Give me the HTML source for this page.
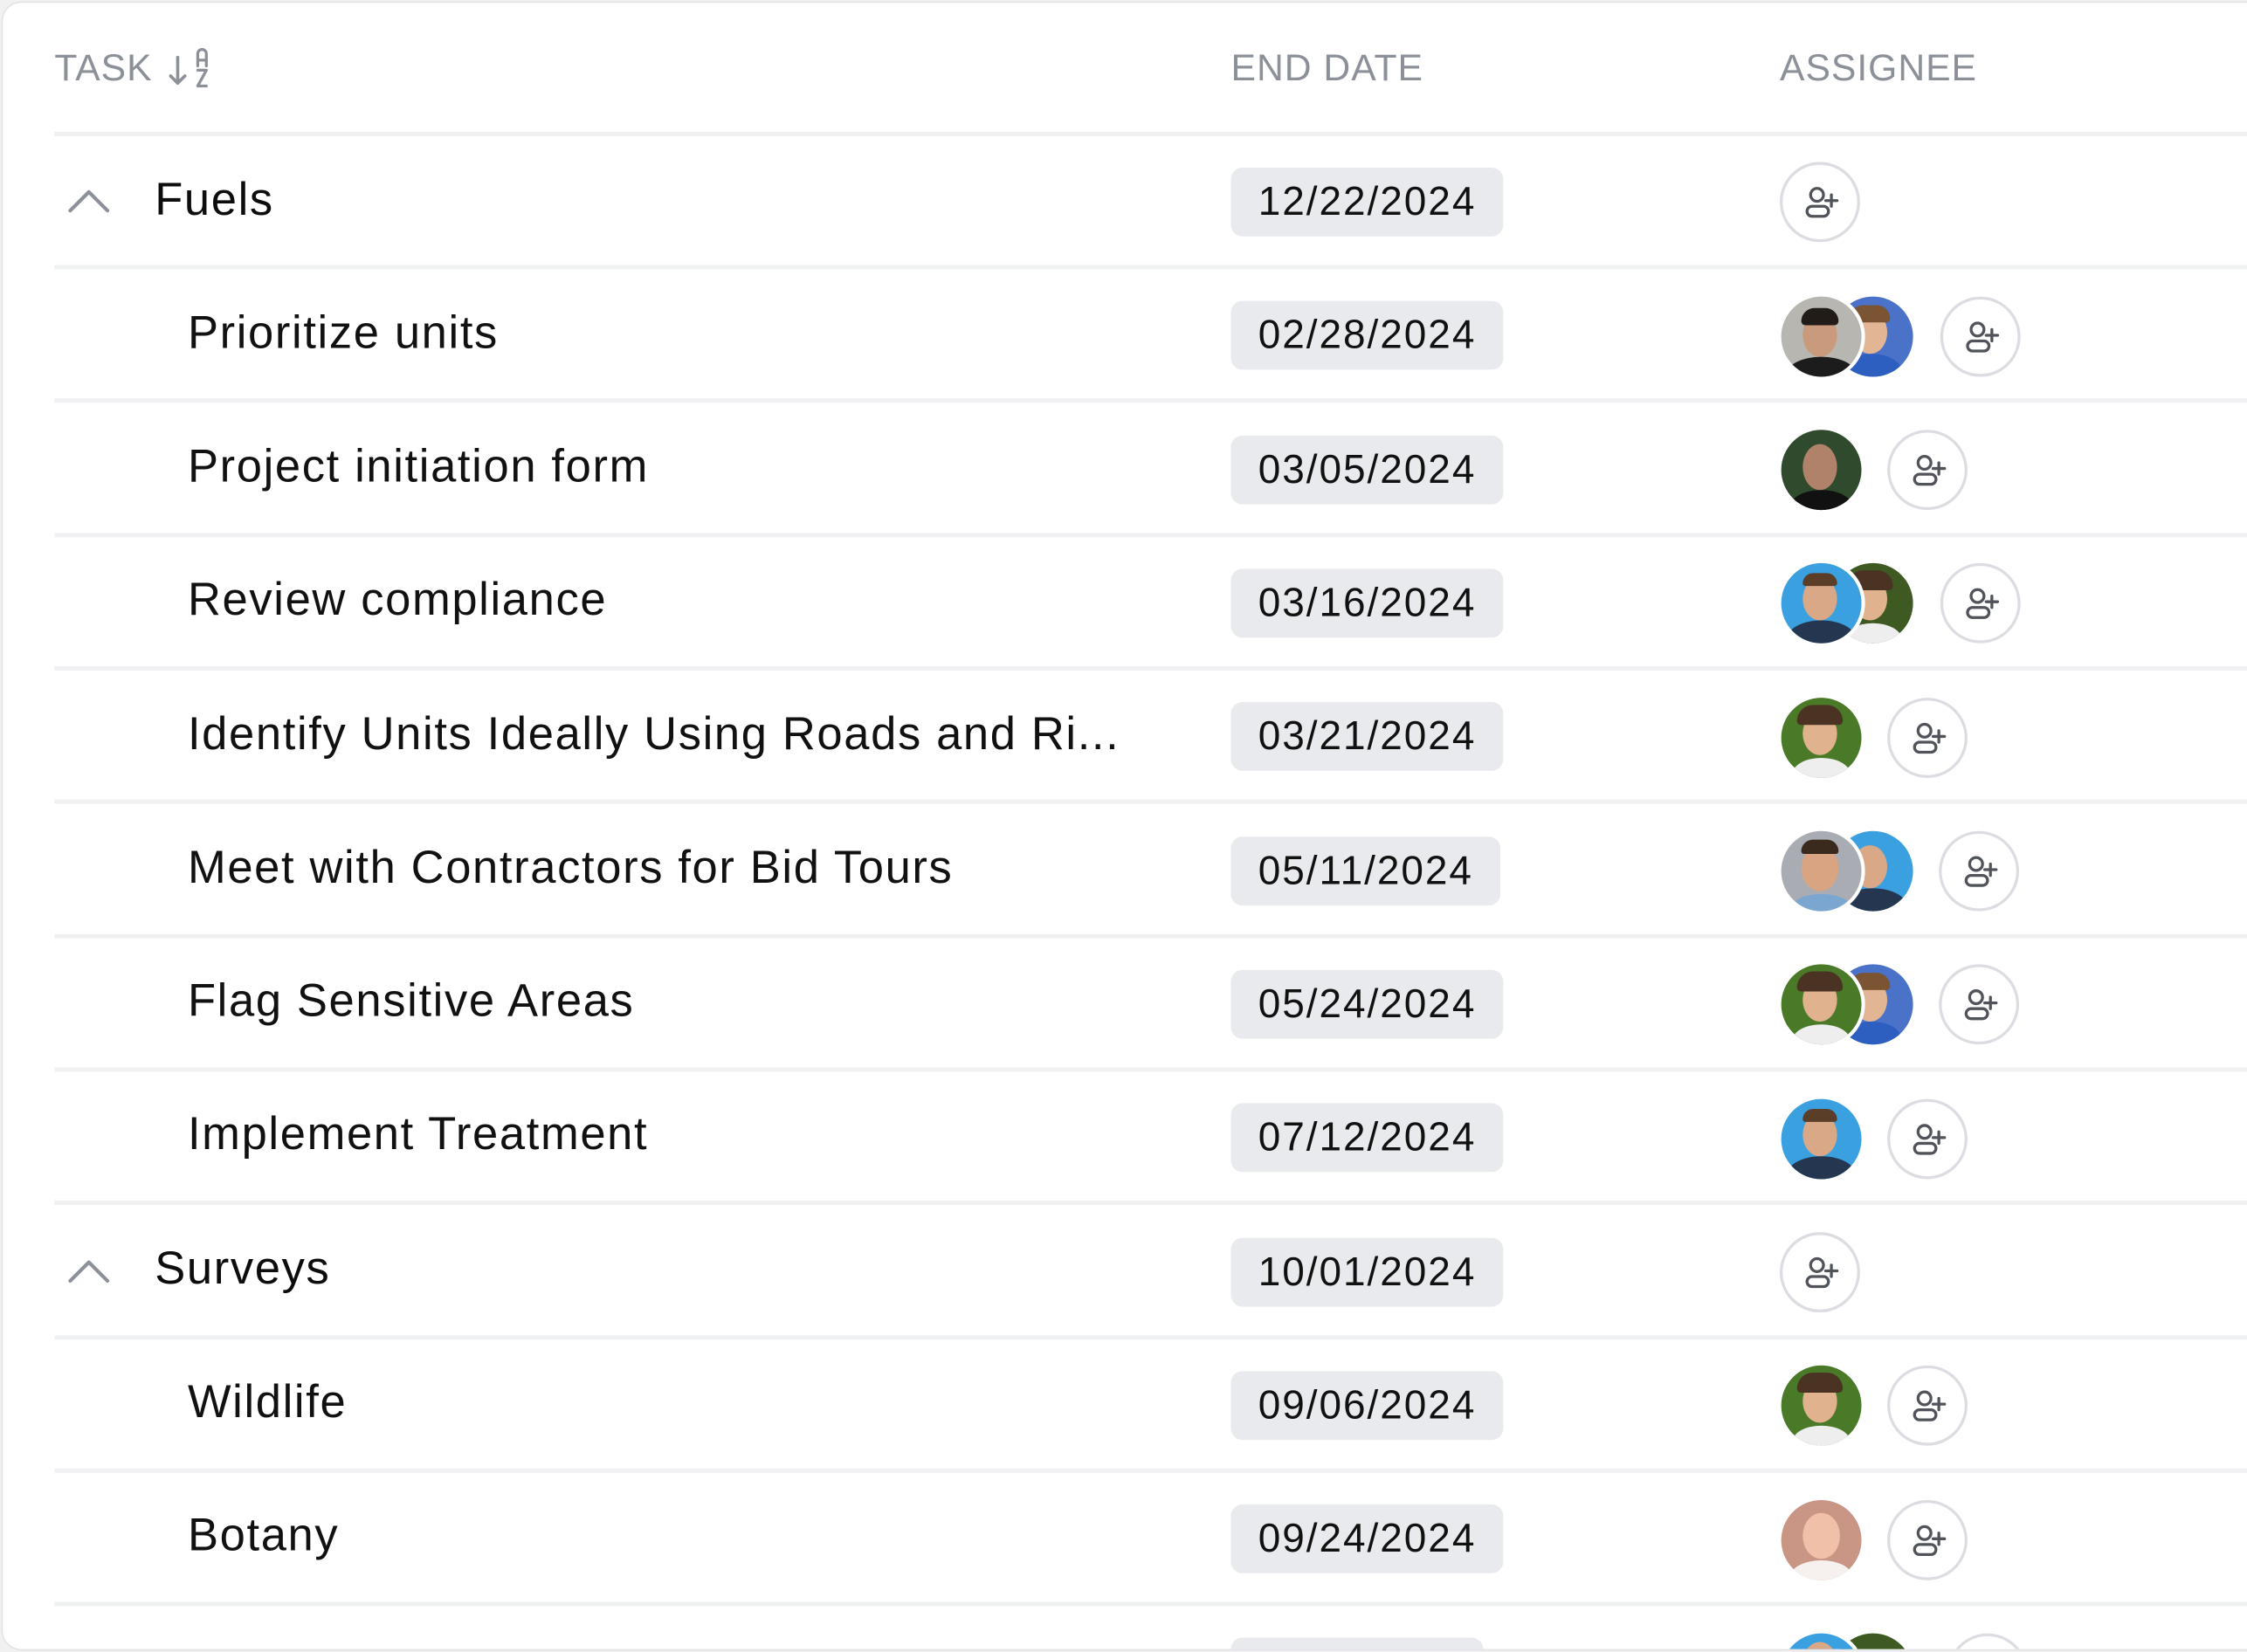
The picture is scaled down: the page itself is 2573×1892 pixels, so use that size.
<!DOCTYPE html>
<html><head><meta charset="utf-8"><style>
html,body{margin:0;padding:0;}
body{width:2573px;height:1892px;overflow:hidden;background:#f1f1f2;font-family:"Liberation Sans",Arial,sans-serif;}
#s{position:absolute;left:0;top:0;width:1568px;height:1153px;transform:scale(1.6409);transform-origin:0 0;}
.card{position:absolute;left:1px;top:1px;width:1600px;height:1149px;background:#fff;border:1.5px solid #e4e4e7;border-radius:14px;overflow:hidden;}
.h{position:absolute;top:30px;font-size:26px;color:#8b9099;letter-spacing:0.6px;}
.line{position:absolute;left:36px;width:1600px;height:3px;background:#eff0f2;}
.t{position:absolute;font-size:32px;color:#111;white-space:nowrap;letter-spacing:1px;}
.g{font-weight:500;left:106px;color:#0d0d0d;}
.sub{left:129px;}
.pill{position:absolute;left:857px;height:48px;border-radius:8px;background:#e9eaee;font-size:28px;color:#111;line-height:48px;padding:0 19px;letter-spacing:1.2px;}
.add{position:absolute;width:52px;height:52px;border:2px solid #dcdde2;border-radius:50%;background:#fff;}
.add svg{position:absolute;left:14px;top:14px;}
.av{position:absolute;width:56px;height:56px;border-radius:50%;overflow:hidden;}
.av.o{box-shadow:0 0 0 2.5px #fff;}
.av i{position:absolute;display:block;}
.chev{position:absolute;left:45px;}
</style></head><body><div id="s"><div class="card">
<div class="h" style="left:36px">TASK</div>
<svg style="position:absolute;left:116px;top:30px" width="34" height="32" viewBox="0 0 34 32"><path d="M6 8v18M1 21l5 5 5-5" fill="none" stroke="#8b9099" stroke-width="2.2" stroke-linecap="round" stroke-linejoin="round"/><path d="M20 14V5.5a3 3 0 0 1 6 0V14M20 10h6" fill="none" stroke="#8b9099" stroke-width="2" stroke-linecap="round"/><path d="M20 17h6l-6 11h6" fill="none" stroke="#8b9099" stroke-width="2" stroke-linecap="round" stroke-linejoin="round"/></svg>
<div class="h" style="left:857px">END DATE</div>
<div class="h" style="left:1240px">ASSIGNEE</div>
<div class="line" style="top:90px"></div>
<div class="line" style="top:183px"></div>
<div class="line" style="top:276px"></div>
<div class="line" style="top:370px"></div>
<div class="line" style="top:463px"></div>
<div class="line" style="top:556px"></div>
<div class="line" style="top:650px"></div>
<div class="line" style="top:743px"></div>
<div class="line" style="top:836px"></div>
<div class="line" style="top:930px"></div>
<div class="line" style="top:1023px"></div>
<div class="line" style="top:1116px"></div>

<svg class="chev" style="top:128px" width="30" height="20" viewBox="0 0 30 20"><path d="M2 17 L15 4 L28 17" fill="none" stroke="#8b9099" stroke-width="2.5" stroke-linecap="round" stroke-linejoin="round"/></svg>
<svg class="chev" style="top:875px" width="30" height="20" viewBox="0 0 30 20"><path d="M2 17 L15 4 L28 17" fill="none" stroke="#8b9099" stroke-width="2.5" stroke-linecap="round" stroke-linejoin="round"/></svg>

<div class="t g" style="top:119px">Fuels</div>
<div class="t sub" style="top:212px">Prioritize units</div>
<div class="t sub" style="top:305px">Project initiation form</div>
<div class="t sub" style="top:398px">Review compliance</div>
<div class="t sub" style="top:492px">Identify Units Ideally Using Roads and Ri...</div>
<div class="t sub" style="top:585px">Meet with Contractors for Bid Tours</div>
<div class="t sub" style="top:678px">Flag Sensitive Areas</div>
<div class="t sub" style="top:771px">Implement Treatment</div>
<div class="t g" style="top:865px">Surveys</div>
<div class="t sub" style="top:958px">Wildlife</div>
<div class="t sub" style="top:1051px">Botany</div>

<div class="pill" style="top:115px">12/22/2024</div>
<div class="pill" style="top:208px">02/28/2024</div>
<div class="pill" style="top:302px">03/05/2024</div>
<div class="pill" style="top:395px">03/16/2024</div>
<div class="pill" style="top:488px">03/21/2024</div>
<div class="pill" style="top:582px">05/11/2024</div>
<div class="pill" style="top:675px">05/24/2024</div>
<div class="pill" style="top:768px">07/12/2024</div>
<div class="pill" style="top:862px">10/01/2024</div>
<div class="pill" style="top:955px">09/06/2024</div>
<div class="pill" style="top:1048px">09/24/2024</div>
<div class="pill" style="top:1141px;width:176px;padding:0"></div>

<div class="add" style="left:1240px;top:111px"><svg width="26" height="26" viewBox="0 0 26 26"><circle cx="10" cy="7" r="4.5" fill="none" stroke="#50535a" stroke-width="2"/><rect x="3" y="15" width="15" height="7" rx="3.5" fill="none" stroke="#50535a" stroke-width="2"/><path d="M20 7v8M16 11h8" stroke="#50535a" stroke-width="2" stroke-linecap="round"/></svg></div>

<div class="av" style="left:1277px;top:205px;background:#4a72c8"><i style="left:14px;top:10px;width:24px;height:30px;border-radius:50%;background:#e2b594"></i><i style="left:12px;top:6px;width:28px;height:12px;border-radius:14px 14px 4px 4px;background:#7a5433"></i><i style="left:6px;top:40px;width:42px;height:24px;border-radius:50%;background:#2d5fc0"></i></div>
<div class="av o" style="left:1241px;top:205px;background:#b8b6b1"><i style="left:15px;top:12px;width:24px;height:30px;border-radius:50%;background:#c99a7c"></i><i style="left:14px;top:8px;width:26px;height:12px;border-radius:13px 13px 4px 4px;background:#221c18"></i><i style="left:4px;top:42px;width:48px;height:24px;border-radius:50%;background:#1c1c1c"></i></div>
<div class="add" style="left:1352px;top:205px"><svg width="26" height="26" viewBox="0 0 26 26"><circle cx="10" cy="7" r="4.5" fill="none" stroke="#50535a" stroke-width="2"/><rect x="3" y="15" width="15" height="7" rx="3.5" fill="none" stroke="#50535a" stroke-width="2"/><path d="M20 7v8M16 11h8" stroke="#50535a" stroke-width="2" stroke-linecap="round"/></svg></div>

<div class="av" style="left:1241px;top:298px;background:#2f4a2c"><i style="left:15px;top:10px;width:24px;height:32px;border-radius:50%;background:#b0826a"></i><i style="left:6px;top:42px;width:44px;height:24px;border-radius:50%;background:#111"></i></div>
<div class="add" style="left:1315px;top:298px"><svg width="26" height="26" viewBox="0 0 26 26"><circle cx="10" cy="7" r="4.5" fill="none" stroke="#50535a" stroke-width="2"/><rect x="3" y="15" width="15" height="7" rx="3.5" fill="none" stroke="#50535a" stroke-width="2"/><path d="M20 7v8M16 11h8" stroke="#50535a" stroke-width="2" stroke-linecap="round"/></svg></div>

<div class="av" style="left:1277px;top:391px;background:#3e5a22"><i style="left:14px;top:10px;width:24px;height:30px;border-radius:50%;background:#e0b38e"></i><i style="left:10px;top:5px;width:32px;height:14px;border-radius:16px 16px 4px 4px;background:#4a3322"></i><i style="left:8px;top:42px;width:40px;height:22px;border-radius:50%;background:#eee"></i></div>
<div class="av o" style="left:1241px;top:391px;background:#3aa0e0"><i style="left:15px;top:10px;width:24px;height:30px;border-radius:50%;background:#d9a887"></i><i style="left:15px;top:7px;width:24px;height:9px;border-radius:12px 12px 3px 3px;background:#5a3e28"></i><i style="left:4px;top:40px;width:48px;height:26px;border-radius:50%;background:#243650"></i></div>
<div class="add" style="left:1352px;top:391px"><svg width="26" height="26" viewBox="0 0 26 26"><circle cx="10" cy="7" r="4.5" fill="none" stroke="#50535a" stroke-width="2"/><rect x="3" y="15" width="15" height="7" rx="3.5" fill="none" stroke="#50535a" stroke-width="2"/><path d="M20 7v8M16 11h8" stroke="#50535a" stroke-width="2" stroke-linecap="round"/></svg></div>

<div class="av" style="left:1241px;top:485px;background:#4a7a28"><i style="left:15px;top:10px;width:24px;height:30px;border-radius:50%;background:#e0b38e"></i><i style="left:11px;top:5px;width:32px;height:14px;border-radius:16px 16px 4px 4px;background:#4a3322"></i><i style="left:8px;top:42px;width:40px;height:22px;border-radius:50%;background:#eee"></i></div>
<div class="add" style="left:1315px;top:485px"><svg width="26" height="26" viewBox="0 0 26 26"><circle cx="10" cy="7" r="4.5" fill="none" stroke="#50535a" stroke-width="2"/><rect x="3" y="15" width="15" height="7" rx="3.5" fill="none" stroke="#50535a" stroke-width="2"/><path d="M20 7v8M16 11h8" stroke="#50535a" stroke-width="2" stroke-linecap="round"/></svg></div>

<div class="av" style="left:1277px;top:578px;background:#3aa0e0"><i style="left:14px;top:10px;width:24px;height:30px;border-radius:50%;background:#d9a887"></i><i style="left:4px;top:40px;width:48px;height:26px;border-radius:50%;background:#243650"></i></div>
<div class="av o" style="left:1241px;top:578px;background:#a9acb3"><i style="left:14px;top:10px;width:26px;height:32px;border-radius:50%;background:#d8a482"></i><i style="left:14px;top:6px;width:26px;height:10px;border-radius:13px 13px 3px 3px;background:#3a2a1e"></i><i style="left:6px;top:44px;width:44px;height:22px;border-radius:50%;background:#7ba6d0"></i></div>
<div class="add" style="left:1351px;top:578px"><svg width="26" height="26" viewBox="0 0 26 26"><circle cx="10" cy="7" r="4.5" fill="none" stroke="#50535a" stroke-width="2"/><rect x="3" y="15" width="15" height="7" rx="3.5" fill="none" stroke="#50535a" stroke-width="2"/><path d="M20 7v8M16 11h8" stroke="#50535a" stroke-width="2" stroke-linecap="round"/></svg></div>

<div class="av" style="left:1277px;top:671px;background:#4a72c8"><i style="left:14px;top:10px;width:24px;height:30px;border-radius:50%;background:#e2b594"></i><i style="left:12px;top:6px;width:28px;height:12px;border-radius:14px 14px 4px 4px;background:#7a5433"></i><i style="left:6px;top:40px;width:42px;height:24px;border-radius:50%;background:#2d5fc0"></i></div>
<div class="av o" style="left:1241px;top:671px;background:#4a7a28"><i style="left:15px;top:10px;width:24px;height:30px;border-radius:50%;background:#e0b38e"></i><i style="left:11px;top:5px;width:32px;height:14px;border-radius:16px 16px 4px 4px;background:#4a3322"></i><i style="left:8px;top:42px;width:40px;height:22px;border-radius:50%;background:#eee"></i></div>
<div class="add" style="left:1351px;top:671px"><svg width="26" height="26" viewBox="0 0 26 26"><circle cx="10" cy="7" r="4.5" fill="none" stroke="#50535a" stroke-width="2"/><rect x="3" y="15" width="15" height="7" rx="3.5" fill="none" stroke="#50535a" stroke-width="2"/><path d="M20 7v8M16 11h8" stroke="#50535a" stroke-width="2" stroke-linecap="round"/></svg></div>

<div class="av" style="left:1241px;top:765px;background:#3aa0e0"><i style="left:15px;top:10px;width:24px;height:30px;border-radius:50%;background:#d9a887"></i><i style="left:15px;top:7px;width:24px;height:9px;border-radius:12px 12px 3px 3px;background:#5a3e28"></i><i style="left:4px;top:40px;width:48px;height:26px;border-radius:50%;background:#243650"></i></div>
<div class="add" style="left:1315px;top:765px"><svg width="26" height="26" viewBox="0 0 26 26"><circle cx="10" cy="7" r="4.5" fill="none" stroke="#50535a" stroke-width="2"/><rect x="3" y="15" width="15" height="7" rx="3.5" fill="none" stroke="#50535a" stroke-width="2"/><path d="M20 7v8M16 11h8" stroke="#50535a" stroke-width="2" stroke-linecap="round"/></svg></div>

<div class="add" style="left:1240px;top:858px"><svg width="26" height="26" viewBox="0 0 26 26"><circle cx="10" cy="7" r="4.5" fill="none" stroke="#50535a" stroke-width="2"/><rect x="3" y="15" width="15" height="7" rx="3.5" fill="none" stroke="#50535a" stroke-width="2"/><path d="M20 7v8M16 11h8" stroke="#50535a" stroke-width="2" stroke-linecap="round"/></svg></div>

<div class="av" style="left:1241px;top:951px;background:#4a7a28"><i style="left:15px;top:10px;width:24px;height:30px;border-radius:50%;background:#e0b38e"></i><i style="left:11px;top:5px;width:32px;height:14px;border-radius:16px 16px 4px 4px;background:#4a3322"></i><i style="left:8px;top:42px;width:40px;height:22px;border-radius:50%;background:#eee"></i></div>
<div class="add" style="left:1315px;top:951px"><svg width="26" height="26" viewBox="0 0 26 26"><circle cx="10" cy="7" r="4.5" fill="none" stroke="#50535a" stroke-width="2"/><rect x="3" y="15" width="15" height="7" rx="3.5" fill="none" stroke="#50535a" stroke-width="2"/><path d="M20 7v8M16 11h8" stroke="#50535a" stroke-width="2" stroke-linecap="round"/></svg></div>

<div class="av" style="left:1241px;top:1045px;background:#c99585"><i style="left:15px;top:9px;width:26px;height:32px;border-radius:50%;background:#f0c0a8"></i><i style="left:6px;top:42px;width:44px;height:24px;border-radius:50%;background:#f6f0ee"></i></div>
<div class="add" style="left:1315px;top:1045px"><svg width="26" height="26" viewBox="0 0 26 26"><circle cx="10" cy="7" r="4.5" fill="none" stroke="#50535a" stroke-width="2"/><rect x="3" y="15" width="15" height="7" rx="3.5" fill="none" stroke="#50535a" stroke-width="2"/><path d="M20 7v8M16 11h8" stroke="#50535a" stroke-width="2" stroke-linecap="round"/></svg></div>

<div class="av" style="left:1277px;top:1138px;background:#3e5a22"></div>
<div class="av o" style="left:1241px;top:1138px;background:#3aa0e0"><i style="left:15px;top:6px;width:24px;height:30px;border-radius:50%;background:#d9a887"></i></div>
<div class="add" style="left:1357px;top:1138px"></div>
</div></div></body></html>
